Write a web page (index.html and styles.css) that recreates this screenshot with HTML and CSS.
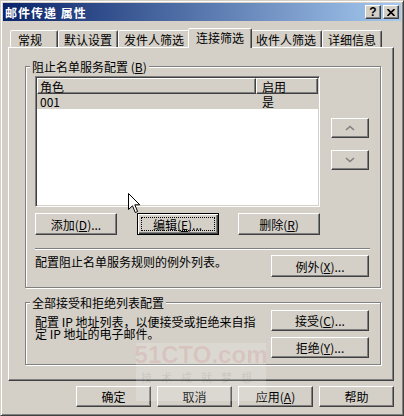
FILE: index.html
```html
<!DOCTYPE html>
<html lang="zh-CN">
<head>
    <meta charset="UTF-8">
    <title>邮件传递 属性</title>
    <link rel="stylesheet" href="styles.css">
</head>
<body>
    <div class="window">
        <div class="titlebar">
            <span class="title">邮件传递 属性</span>
            <div class="caption-btns">
                <span class="cap-btn help">?</span>
                <span class="cap-btn">
                    <svg width="8" height="7" viewBox="0 0 8 7"><path d="M0.5 0 L7.5 7 M7.5 0 L0.5 7" stroke="#000" stroke-width="1.6"/></svg>
                </span>
            </div>
        </div>

        <div class="client">
            <div class="tabs">
                <div class="tab short">常规</div>
                <div class="tab">默认设置</div>
                <div class="tab">发件人筛选</div>
                <div class="tab active">连接筛选</div>
                <div class="tab">收件人筛选</div>
                <div class="tab">详细信息</div>
            </div>

            <div class="panel">
                <fieldset class="group">
                    <legend>阻止名单服务配置 (<u>B</u>)</legend>
                    <div class="list-area">
                        <div class="listview">
                            <div class="lv-head">
                                <div class="col col-role">角色</div>
                                <div class="col col-on">启用</div>
                            </div>
                            <div class="lv-row selected">
                                <div class="cell col-role">001</div>
                                <div class="cell col-on">是</div>
                            </div>
                        </div>
                        <div class="order-btns">
                            <button class="btn btn-arrow">
                                <svg width="10" height="6" viewBox="0 0 10 6"><path d="M1 5 L5 1.5 L9 5" fill="none" stroke="#808080" stroke-width="1.6"/></svg>
                            </button>
                            <button class="btn btn-arrow">
                                <svg width="10" height="6" viewBox="0 0 10 6"><path d="M1 1 L5 4.5 L9 1" fill="none" stroke="#808080" stroke-width="1.6"/></svg>
                            </button>
                        </div>
                    </div>
                    <div class="list-actions">
                        <button class="btn btn-mid">添加(<u>D</u>)...</button>
                        <button class="btn btn-mid focused"><span class="focus-box">编辑(<u>E</u>)...</span></button>
                        <button class="btn btn-mid">删除(<u>R</u>)</button>
                    </div>
                    <hr class="sep">
                    <div class="text-row">
                        <span>配置阻止名单服务规则的例外列表。</span>
                        <button class="btn btn-wide">例外(<u>X</u>)...</button>
                    </div>
                </fieldset>

                <fieldset class="group group-accept">
                    <legend>全部接受和拒绝列表配置</legend>
                    <div class="accept-row">
                        <p class="desc">配置 IP 地址列表，以便接受或拒绝来自指定 IP 地址的电子邮件。</p>
                        <div class="btn-col">
                            <button class="btn btn-wide">接受(<u>C</u>)...</button>
                            <button class="btn btn-wide">拒绝(<u>Y</u>)...</button>
                        </div>
                    </div>
                </fieldset>
            </div>

            <div class="footer">
                <button class="btn btn-foot">确定</button>
                <button class="btn btn-foot">取消</button>
                <button class="btn btn-foot">应用(<u>A</u>)</button>
                <button class="btn btn-foot">帮助</button>
            </div>
        </div>

        <!-- watermark from the screenshot source -->
        <div class="watermark">
            <span class="wm-logo">51CTO.com</span>
            <span class="wm-slogan">技术成就梦想</span>
        </div>

        <svg class="cursor" width="13" height="21" viewBox="0 0 13 21">
            <path d="M0.5 0.5 L0.5 16.5 L4.5 12.8 L7.3 19.5 L9.6 18.5 L6.8 11.8 L11.8 11.8 Z" fill="#fff" stroke="#000" stroke-width="1"/>
        </svg>
    </div>
</body>
</html>
```

FILE: styles.css
```css
* {
    box-sizing: border-box;
}

body {
    margin: 0;
    font-family: "Noto Sans CJK SC", "Noto Sans", sans-serif;
    font-size: 12px;
    line-height: 13px;
    color: #000000;
    background: #d4d0c8;
}

u {
    text-decoration: underline;
}

.window {
    position: relative;
    width: 404px;
    height: 416px;
    background: #d4d0c8;
    border: 1px solid;
    border-color: #d4d0c8 #404040 #404040 #d4d0c8;
    box-shadow: inset 1px 1px #ffffff, inset -1px -1px #808080;
    padding: 2px;
    overflow: hidden;
}

/* title bar */
.titlebar {
    height: 18px;
    display: flex;
    align-items: center;
    justify-content: space-between;
    padding: 0 2px 0 2px;
    background: linear-gradient(to right, #0a246a, #a6caf0);
}

.title {
    color: #ffffff;
    font-weight: bold;
    letter-spacing: 1px;
}

.caption-btns {
    display: flex;
    gap: 2px;
}

.cap-btn {
    width: 16px;
    height: 14px;
    display: flex;
    align-items: center;
    justify-content: center;
    background: #d4d0c8;
    border: 1px solid;
    border-color: #ffffff #404040 #404040 #ffffff;
    box-shadow: inset -1px -1px #808080;
}

.cap-btn.help {
    font-family: "Liberation Sans", sans-serif;
    font-weight: bold;
    font-size: 12px;
}

/* client area */
.client {
    height: 392px;
    padding: 0 7px 0 5px;
}

.tabs {
    position: relative;
    z-index: 1;
    display: flex;
    align-items: flex-end;
    height: 19px;
    margin-top: 7px;
    padding-left: 2px;
}

.tab {
    height: 17px;
    min-width: 0;
    padding: 1px 5px 0;
    display: flex;
    align-items: center;
    border: 1px solid;
    border-bottom: none;
    border-color: #ffffff #404040 transparent #ffffff;
    box-shadow: inset -1px 0 #808080;
    border-radius: 2px 2px 0 0;
    background: #d4d0c8;
    white-space: nowrap;
}

.tab.short {
    min-width: 48px;
    padding-left: 7px;
}

.tab.active {
    position: relative;
    z-index: 2;
    height: 20px;
    margin: 0 -2px -1px;
    padding: 0 7px 2px;
}

.panel {
    height: 334px;
    padding: 12px 12px 0 16px;
    border: 1px solid;
    border-color: #ffffff #404040 #404040 #ffffff;
    box-shadow: inset -1px -1px #808080;
}

/* group boxes */
.group {
    margin: 0;
    min-width: 0;
    padding: 3px 11px 10px 9px;
    border: 1px solid #808080;
    box-shadow: inset 1px 1px #ffffff, 1px 1px #ffffff;
}

.group legend {
    padding: 0 2px;
    margin-left: -5px;
    background: #d4d0c8;
    line-height: 13px;
}

.group-accept {
    margin-top: 8px;
    padding: 1px 11px 6px 9px;
}

.list-area {
    display: flex;
    justify-content: space-between;
}

.listview {
    width: 285px;
    height: 131px;
    background: #ffffff;
    border: 1px solid;
    border-color: #808080 #ffffff #ffffff #808080;
    box-shadow: inset 1px 1px #404040, inset -1px -1px #d4d0c8;
    padding: 1px;
}

.lv-head {
    display: flex;
    height: 16px;
}

.col {
    height: 16px;
    display: flex;
    align-items: center;
    background: #d4d0c8;
    border: 1px solid;
    border-color: #ffffff #404040 #404040 #ffffff;
    box-shadow: inset -1px -1px #808080;
    padding-left: 2px;
}

.col-role {
    width: 219px;
}

.col-on {
    width: 62px;
    padding-left: 5px;
}

.lv-row {
    display: flex;
    height: 15px;
}

.lv-row.selected {
    background: #d4d0c8;
}

.cell {
    display: flex;
    align-items: center;
    padding-left: 3px;
}

.cell.col-on {
    padding-left: 6px;
}

.order-btns {
    display: flex;
    flex-direction: column;
    gap: 12px;
    padding-top: 42px;
}

/* buttons */
.btn {
    font: inherit;
    color: #000000;
    height: 22px;
    padding: 0;
    display: flex;
    align-items: center;
    justify-content: center;
    background: #d4d0c8;
    border: 1px solid;
    border-color: #ffffff #404040 #404040 #ffffff;
    box-shadow: inset -1px -1px #808080;
    white-space: nowrap;
}

.btn-arrow {
    width: 38px;
    height: 20px;
}

.btn-mid {
    width: 82px;
}

.btn-wide {
    width: 98px;
}

.btn-foot {
    width: 75px;
    height: 21px;
}

.btn.focused {
    border-color: #000000;
    box-shadow: inset 1px 1px #ffffff, inset -1px -1px #404040, inset -2px -2px #808080;
}

.focus-box {
    flex: 1;
    align-self: stretch;
    margin: 3px;
    display: flex;
    align-items: center;
    justify-content: center;
    border: 1px dotted #000000;
}

.list-actions {
    width: 285px;
    display: flex;
    justify-content: space-between;
    margin-top: 6px;
}

.sep {
    width: 335px;
    height: 2px;
    margin: 13px 0 0;
    border: none;
    border-top: 1px solid #808080;
    border-bottom: 1px solid #ffffff;
}

.text-row {
    display: flex;
    justify-content: space-between;
    align-items: flex-start;
    margin-top: 5px;
}

.accept-row {
    display: flex;
    justify-content: space-between;
}

.desc {
    width: 228px;
    margin: 6px 0 0;
    line-height: 12px;
}

.btn-col {
    display: flex;
    flex-direction: column;
    gap: 6px;
}

.btn-col .btn {
    height: 21px;
}

.footer {
    display: flex;
    justify-content: flex-end;
    gap: 6px;
    margin-top: 5px;
}

/* overlays */
.watermark {
    position: absolute;
    left: 135px;
    top: 342px;
    width: 130px;
    height: 58px;
    display: flex;
    flex-direction: column;
    align-items: center;
    background: rgba(255, 255, 255, 0.18);
    pointer-events: none;
}

.wm-logo {
    font-family: "Liberation Sans", sans-serif;
    font-weight: bold;
    font-size: 24px;
    line-height: 24px;
    color: rgba(190, 60, 60, 0.13);
}

.wm-slogan {
    margin-top: 5px;
    font-weight: bold;
    font-size: 11px;
    line-height: 11px;
    letter-spacing: 9px;
    color: rgba(0, 0, 0, 0.07);
}

.cursor {
    position: absolute;
    left: 127px;
    top: 192px;
}
```
